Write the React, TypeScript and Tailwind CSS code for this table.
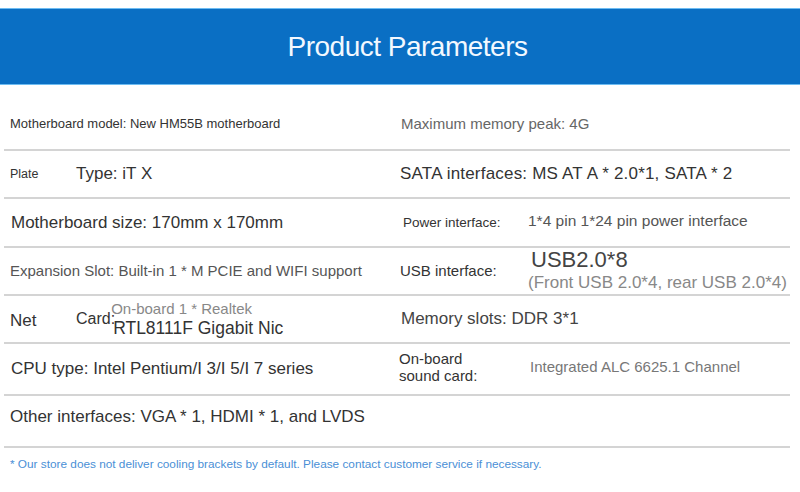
const font = { fontFamily: '"Liberation Sans", Arial, sans-serif' };

function Row({ h, className = '', left, right }: { h: string; className?: string; left: React.ReactNode; right: React.ReactNode }) {
  return (
    <div className={`grid grid-cols-[396px_1fr] border-b-2 border-[#d4d4d4] ${h} ${className}`}>
      <div className="flex items-center pl-[6px]">{left}</div>
      <div className="flex items-center">{right}</div>
    </div>
  );
}

export default function App() {
  return (
    <div className="w-[800px] h-[492px] bg-white overflow-hidden text-[#333]" style={font}>
      <div className="h-[8px]" />
      <div className="h-[77px] border-y border-[#6dbcf2] bg-[#0a6fc4] flex items-center justify-center pl-[15px]">
        <h1 className="text-[28px] text-[#f2f8ff] tracking-[-0.5px]">Product Parameters</h1>
      </div>

      <div className="mx-[4px] w-[786px]">
        <Row
          h="h-[66px]"
          className="pt-[14px]"
          left={<span className="text-[13px] text-[#333]">Motherboard model: New HM55B motherboard</span>}
          right={<span className="text-[15px] text-[#666] pl-[1px]">Maximum memory peak: 4G</span>}
        />
        <Row
          h="h-[48px]"
          left={
            <div className="flex items-center">
              <span className="w-[66px] text-[12.5px]">Plate</span>
              <span className="text-[17px]">Type: iT X</span>
            </div>
          }
          right={<span className="text-[17px] tracking-[0.2px] text-[#333]">SATA interfaces: MS AT A * 2.0*1, SATA * 2</span>}
        />
        <Row
          h="h-[49px]"
          left={<span className="text-[17px] pl-[1px]">Motherboard size: 170mm x 170mm</span>}
          right={
            <div className="flex items-center">
              <span className="w-[128px] pl-[3px] text-[13.5px] pt-[2px]">Power interface:</span>
              <span className="text-[15.5px] text-[#555] -mt-[3px]">1*4 pin 1*24 pin power interface</span>
            </div>
          }
        />
        <Row
          h="h-[48px]"
          left={<span className="text-[15px] text-[#555]">Expansion Slot: Built-in 1 * M PCIE and WIFI support</span>}
          right={
            <div className="flex items-center">
              <span className="w-[128px] text-[15px]">USB interface:</span>
              <div className="flex flex-col">
                <span className="text-[22px] leading-[22px] pl-[3px] text-[#444]">USB2.0*8</span>
                <span className="text-[17px] leading-[23px] text-[#888]">(Front USB 2.0*4, rear USB 2.0*4)</span>
              </div>
            </div>
          }
        />
        <Row
          h="h-[48px]"
          left={
            <div className="flex items-center">
              <span className="w-[66px] text-[17px] pt-[4px]">Net</span>
              <span className="text-[16px]">Card:</span>
              <div className="flex flex-col -ml-[4px]">
                <span className="text-[15px] leading-[18px] text-[#888]">On-board 1 * Realtek</span>
                <span className="text-[17.5px] leading-[20px] pl-[2px]">RTL8111F Gigabit Nic</span>
              </div>
            </div>
          }
          right={<span className="text-[17px] text-[#444] pl-[1px]">Memory slots: DDR 3*1</span>}
        />
        <Row
          h="h-[52px]"
          left={<span className="text-[17px] pl-[1px]">CPU type: Intel Pentium/I 3/I 5/I 7 series</span>}
          right={
            <div className="flex items-center pb-[4px]">
              <div className="w-[131px] flex flex-col text-[15px] leading-[17px] -ml-[1px]">
                <span>On-board</span>
                <span>sound card:</span>
              </div>
              <span className="text-[15px] text-[#777]">Integrated ALC 6625.1 Channel</span>
            </div>
          }
        />
        <Row
          h="h-[52px]"
          className="pb-[8px]"
          left={<span className="text-[17px]">Other interfaces: VGA * 1, HDMI * 1, and LVDS</span>}
          right={<span />}
        />
      </div>

      <p className="pl-[10px] pt-[8px] text-[11.8px] leading-[16px] text-[#4a8fd6]">
        * Our store does not deliver cooling brackets by default. Please contact customer service if necessary.
      </p>
    </div>
  );
}
